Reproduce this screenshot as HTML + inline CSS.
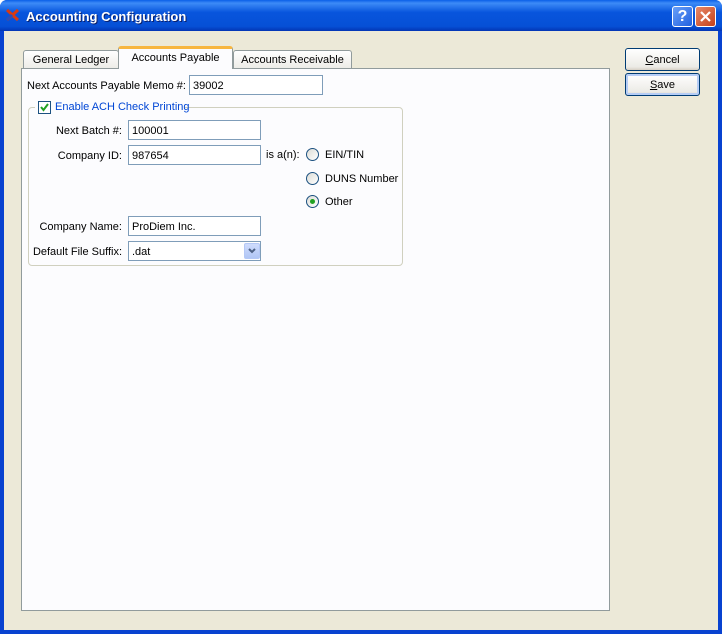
<!DOCTYPE html><html><head><style>
*{box-sizing:border-box}
body{margin:0;width:722px;height:634px;overflow:hidden;font-family:"Liberation Sans",sans-serif;font-size:11px;color:#000}
div{white-space:nowrap}
.win{position:absolute;left:0;top:0;width:722px;height:634px;background:#0842d0;border-radius:7px 7px 0 0}
.title{position:absolute;left:0;top:0;width:722px;height:31px;border-radius:7px 7px 0 0;background:linear-gradient(#0a5fe8 0%,#3d8bf7 10%,#0855dd 40%,#0650d6 85%,#0335b4 100%)}
.title .t{position:absolute;left:26px;top:9px;color:#fff;font-weight:bold;font-size:13px;text-shadow:1px 1px #0a1f6b}
.client{position:absolute;left:4px;top:31px;width:714px;height:599px;background:#ece9d8}
.abs{position:absolute}
.panel{position:absolute;left:21px;top:68px;width:589px;height:543px;background:#fcfcfe;border:1px solid #919b9c}
.tab{position:absolute;height:19px;border:1px solid #919b9c;border-bottom:none;border-radius:3px 3px 0 0;background:linear-gradient(#fff,#ecebe6);text-align:center;line-height:18px}
.inp{position:absolute;height:20px;border:1px solid #7f9db9;background:#fff;padding:3px 3px;line-height:14px}
.lbl{position:absolute;text-align:right;line-height:14px}
.rad{position:absolute;width:13px;height:13px;border:1px solid #1c5180;border-radius:50%;background:linear-gradient(135deg,#dcdcd6,#fff)}
.btn{position:absolute;width:75px;height:23px;border:1px solid #003c74;border-radius:3px;background:linear-gradient(#fff,#ecebe6 85%,#d6d0c5);text-align:center;line-height:22px}
</style></head><body>
<div class="win">
<div class="title">
<svg class="abs" style="left:6px;top:9px" width="14" height="12"><path d="M1 1 L12 11 M12 1 L1 11" stroke="#d83a12" stroke-width="3"/><path d="M1 11 L6 6" stroke="#2a4fb8" stroke-width="3"/></svg>
<div class="t">Accounting Configuration</div>
<div class="abs" style="left:672px;top:6px;width:21px;height:21px;border:1px solid #fff;border-radius:3px;background:linear-gradient(135deg,#6aa0f8,#2060e0);color:#fff;font-weight:bold;font-size:16px;text-align:center;line-height:19px">?</div>
<div class="abs" style="left:695px;top:6px;width:21px;height:21px;border:1px solid #fff;border-radius:3px;background:linear-gradient(135deg,#e88a6a,#c4401a)"><svg width="19" height="19"><path d="M5 5L14 14M14 5L5 14" stroke="#fff" stroke-width="2.2"/></svg></div>
</div>
<div class="client"></div>
<div class="tab" style="left:23px;top:50px;width:96px">General Ledger</div>
<div class="tab" style="left:233px;top:50px;width:119px">Accounts Receivable</div>
<div class="panel"></div>
<div class="tab" style="left:118px;top:46px;width:115px;height:23px;background:#fcfcfe;border-top:3px solid #f7b640;line-height:18px;z-index:2">Accounts Payable</div>
<div class="lbl" style="left:27px;top:79px">Next Accounts Payable Memo #:</div>
<div class="inp" style="left:189px;top:75px;width:134px">39002</div>
<div class="abs" style="left:28px;top:107px;width:375px;height:159px;border:1px solid #d0d0bf;border-radius:4px"></div>
<div class="abs" style="left:35px;top:100px;width:150px;height:14px;background:#fcfcfe"></div>
<div class="abs" style="left:38px;top:101px;width:13px;height:13px;border:1px solid #1c5180;background:#fff"><svg width="11" height="11"><path d="M2 5L4.5 8L9 2" stroke="#21a121" stroke-width="2" fill="none"/></svg></div>
<div class="abs" style="left:55px;top:101px;color:#0046d5">Enable ACH Check Printing</div>
<div class="lbl" style="left:22px;top:124px;width:100px">Next Batch #:</div>
<div class="inp" style="left:128px;top:120px;width:133px">100001</div>
<div class="lbl" style="left:22px;top:149px;width:100px">Company ID:</div>
<div class="inp" style="left:128px;top:145px;width:133px">987654</div>
<div class="abs" style="left:266px;top:149px">is a(n):</div>
<div class="rad" style="left:306px;top:148px"></div><div class="abs" style="left:325px;top:149px">EIN/TIN</div>
<div class="rad" style="left:306px;top:172px"></div><div class="abs" style="left:325px;top:173px">DUNS Number</div>
<div class="rad" style="left:306px;top:195px"><div class="abs" style="left:3px;top:3px;width:5px;height:5px;border-radius:50%;background:#21a121"></div></div><div class="abs" style="left:325px;top:196px">Other</div>
<div class="lbl" style="left:22px;top:220px;width:100px">Company Name:</div>
<div class="inp" style="left:128px;top:216px;width:133px">ProDiem Inc.</div>
<div class="lbl" style="left:22px;top:245px;width:100px">Default File Suffix:</div>
<div class="inp" style="left:128px;top:241px;width:133px">.dat</div>
<div class="abs" style="left:244px;top:243px;width:16px;height:16px;border-radius:2px;background:linear-gradient(#cfdcfd,#b0c6f5);border:1px solid #b4c8f6"><svg width="14" height="14"><path d="M4 5L7 8L10 5" stroke="#4d6185" stroke-width="2" fill="none"/></svg></div>
<div class="btn" style="left:625px;top:48px"><u>C</u>ancel</div>
<div class="btn" style="left:625px;top:73px;box-shadow:inset 0 0 0 2px #b6cdf5"><u>S</u>ave</div>
</div>
</body></html>
